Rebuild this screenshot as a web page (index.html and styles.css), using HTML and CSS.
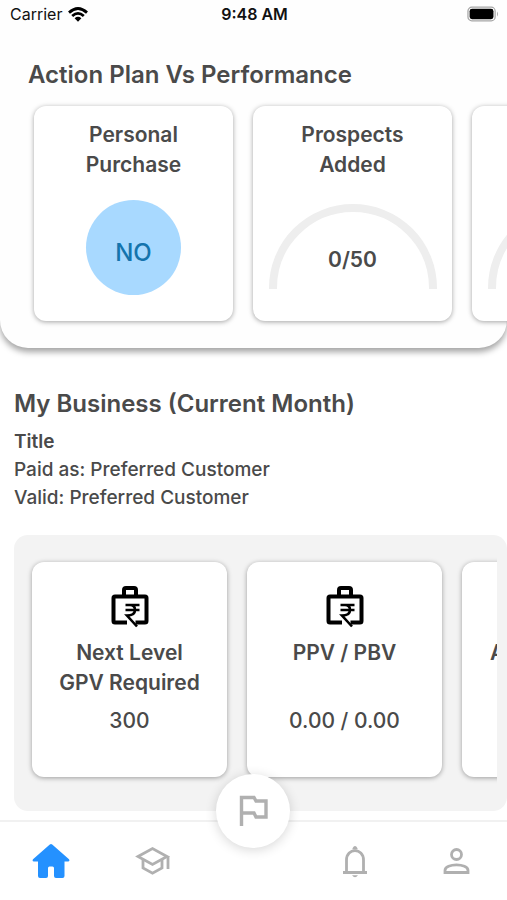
FILE: index.html
```html
<!DOCTYPE html>
<html lang="en">
<head>
<meta charset="utf-8">
<meta name="viewport" content="width=device-width, initial-scale=1">
<title>Dashboard</title>
<link rel="stylesheet" href="styles.css">
</head>
<body>
<svg class="defs" aria-hidden="true">
  <symbol id="briefcase" viewBox="0 0 40 44">
    <g fill="none" stroke="currentColor" stroke-width="4" stroke-linejoin="round">
      <path d="M14 10V5Q14 3 16 3H24Q26 3 26 5V10"/>
      <path d="M17 37.500H5Q3.500 37.500 3.500 36V13Q3.500 11.500 5 11.500H35Q36.500 11.500 36.500 13V36Q36.500 37.500 35 37.500H25.500"/>
    </g>
    <path d="M15.500 20H29.500M15.500 25H29.500M16 20H20Q25 20 25 25Q25 30.500 17 30.500L27 41.500" fill="none" stroke="currentColor" stroke-width="2.600"/>
  </symbol>
  <symbol id="gauge" viewBox="0 0 168 85">
    <path d="M4 85V84A80 80 0 0 1 164 84V85" fill="none" stroke="currentColor" stroke-width="8"/>
  </symbol>
</svg>

<section class="plan">
  <header class="status">
    <div class="carrier">
      <span>Carrier</span>
      <svg class="wifi" viewBox="0 0 20 15" aria-label="Wi-Fi">
        <g fill="none" stroke="currentColor" stroke-width="2.800">
          <path d="M1 5.600Q10 -2.600 19 5.600"/>
          <path d="M4.200 9Q10 3.800 15.800 9"/>
        </g>
        <path d="M6.600 11.200Q10 8.400 13.400 11.200L10 14.800Z" fill="currentColor"/>
      </svg>
    </div>
    <time class="time">9:48 AM</time>
    <svg class="battery" viewBox="0 0 33 16" aria-label="Battery full">
      <rect x="1" y="1" width="28" height="14" rx="4" fill="none" stroke="#a6a6a6" stroke-width="1.300"/>
      <rect x="2.700" y="2.700" width="24.600" height="10.600" rx="2.500" fill="#000"/>
      <path d="M31 5.500Q33 8 31 10.500Z" fill="#a6a6a6"/>
    </svg>
  </header>
  <h1>Action Plan Vs Performance</h1>
  <div class="row plan-row">
    <article class="card plan-card">
      <h2>Personal<br>Purchase</h2>
      <div class="badge">NO</div>
    </article>
    <article class="card plan-card">
      <h2>Prospects<br>Added</h2>
      <div class="meter"><svg><use href="#gauge"/></svg><strong>0/50</strong></div>
    </article>
    <article class="card plan-card">
      <h2></h2>
      <div class="meter"><svg><use href="#gauge"/></svg></div>
    </article>
  </div>
</section>

<main class="business">
  <h1>My Business (Current Month)</h1>
  <div class="titles">
    <h2>Title</h2>
    <p>Paid as: Preferred Customer</p>
    <p>Valid: Preferred Customer</p>
  </div>
  <div class="tray">
    <div class="row tray-row">
      <article class="card biz-card">
        <svg class="case"><use href="#briefcase"/></svg>
        <h2>Next Level<br>GPV Required</h2>
        <p>300</p>
      </article>
      <article class="card biz-card">
        <svg class="case"><use href="#briefcase"/></svg>
        <h2>PPV / PBV</h2>
        <p>0.00 / 0.00</p>
      </article>
      <article class="card biz-card partial">
        <h2>A</h2>
      </article>
    </div>
  </div>
</main>

<nav class="tabs">
  <a href="#home" class="active" aria-label="Home">
    <svg class="home" viewBox="0 0 38 36"><path d="M17.800 1.600Q19 .6 20.200 1.600L37 16.300Q38.200 18.500 36 18.500H32.500V33Q32.500 35 30.500 35H24Q22 35 22 33V25Q22 23.500 20.500 23.500H17.500Q16 23.500 16 25V33Q16 35 14 35H8Q6 35 6 33V18.500H2Q-.2 18.500 1 16.300Z" fill="currentColor"/></svg>
  </a>
  <a href="#learn" aria-label="Learning">
    <svg class="icon" viewBox="0 0 36 36"><g fill="none" stroke="currentColor" stroke-width="2.800"><path d="M4 13.500L18.500 5.500L33 13.500L18.500 21.500Z"/><path d="M9 16.500V25L18.500 30.200L28 25V16.500M34 13V26"/></g></svg>
  </a>
  <a href="#goals" class="flag" aria-label="Goals">
    <svg viewBox="0 0 30 32"><path d="M3.500 31V2.500H16L18 6H28V22H18L16 18H3.500" fill="none" stroke="currentColor" stroke-width="3.400"/></svg>
  </a>
  <a href="#alerts" aria-label="Notifications">
    <svg class="icon" viewBox="0 0 36 36"><path d="M6 29.500H30M9.500 29V17C9.500 4.500 26.500 4.500 26.500 17V29" fill="none" stroke="currentColor" stroke-width="2.800"/><path d="M15.500 6.500V5.200Q18 .8 20.500 5.200V6.500ZM15 32.300H21Q18 36 15 32.300Z" fill="currentColor"/></svg>
  </a>
  <a href="#profile" aria-label="Profile">
    <svg class="icon" viewBox="0 0 36 36"><g fill="none" stroke="currentColor" stroke-width="2.800"><circle cx="18.500" cy="11.500" r="5"/><path d="M7 29.500V27.500C7 20 30 20 30 27.500V29.500Z"/></g></svg>
  </a>
</nav>
</body>
</html>
```
FILE: styles.css
```css
* { box-sizing: border-box; }

body {
  margin: 0;
  min-height: 100vh;
  display: flex;
  flex-direction: column;
  overflow-x: hidden;
  background: #fff;
  color: #4a4a4a;
  font-family: Inter, "Liberation Sans", sans-serif;
}

h1, h2, p { margin: 0; }

h1 {
  font-size: 24px;
  line-height: 30px;
  font-weight: 600;
}

.defs { display: none; }

.plan {
  background: #fefefe;
  border-radius: 0 0 28px 28px;
  box-shadow: 0 4px 6px rgba(0, 0, 0, .36);
  padding-bottom: 17px;
}

.status {
  display: grid;
  grid-template-columns: 1fr auto 1fr;
  align-items: center;
  height: 28px;
  padding: 0 8px 0 10px;
  color: #111;
  font-size: 16px;
}

.carrier {
  display: flex;
  align-items: center;
  gap: 6px;
}

.wifi { width: 20px; height: 15px; color: #000; }
.time { font-weight: 600; }
.battery { width: 32px; height: 16px; justify-self: end; }

.plan h1 { padding: 0 28px; margin-top: 32px; }

.row {
  display: flex;
  gap: 20px;
  overflow: hidden;
}

.plan-row { padding: 16px 0 10px 34px; }

.card {
  flex: none;
  height: 215px;
  display: flex;
  flex-direction: column;
  align-items: center;
  background: #fff;
  border-radius: 12px;
  box-shadow: 0 1px 5px rgba(0, 0, 0, .36);
  text-align: center;
}

.card h2 {
  height: 60px;
  font-size: 21px;
  line-height: 30px;
  font-weight: 600;
}

.plan-card { width: 199px; padding-top: 14px; }

.badge {
  width: 95px;
  height: 95px;
  margin-top: 20px;
  padding-top: 10px;
  display: grid;
  place-items: center;
  border-radius: 50%;
  background: #a8d9ff;
  color: #1474ad;
  font-size: 24px;
  font-weight: 500;
}

.meter {
  display: grid;
  place-items: center;
  margin-top: 24px;
}

.meter > * { grid-area: 1 / 1; }
.meter svg { width: 168px; height: 85px; color: #eee; }
.meter strong { padding-top: 26px; font-size: 21px; font-weight: 600; }

.business { flex: 1; padding: 41px 0 9px 14px; }

.titles {
  margin-top: 9px;
  font-size: 19px;
  line-height: 28px;
  font-weight: 500;
}

.titles h2 { font-size: 19px; font-weight: 600; }

.tray {
  margin-top: 23px;
  padding: 17px 10px 24px 0;
  background: #f3f3f3;
  border-radius: 14px;
}

.tray-row { padding: 10px 0 10px 18px; }

.biz-card { width: 195px; padding-top: 23px; }

.case { width: 40px; height: 44px; margin-bottom: 9px; color: #000; }

.biz-card p {
  margin-top: 8px;
  font-size: 21px;
  line-height: 30px;
  font-weight: 500;
}

.partial { align-items: flex-start; padding: 76px 0 0 28px; }

.tabs {
  display: grid;
  grid-template-columns: repeat(5, 1fr);
  place-items: center;
  height: 80px;
  border-top: 2px solid #f1f1f1;
  background: #fff;
  color: #b0b0b0;
}

.tabs a { display: grid; place-items: center; color: inherit; }
.tabs .active { color: #2491ff; }
.home { width: 38px; height: 36px; }
.icon { width: 36px; height: 36px; }

.tabs .flag {
  width: 74px;
  height: 74px;
  position: relative;
  top: -50px;
  background: #fff;
  border-radius: 50%;
  box-shadow: 0 2px 12px rgba(0, 0, 0, .16);
}

.flag svg { width: 30px; height: 32px; }
```
